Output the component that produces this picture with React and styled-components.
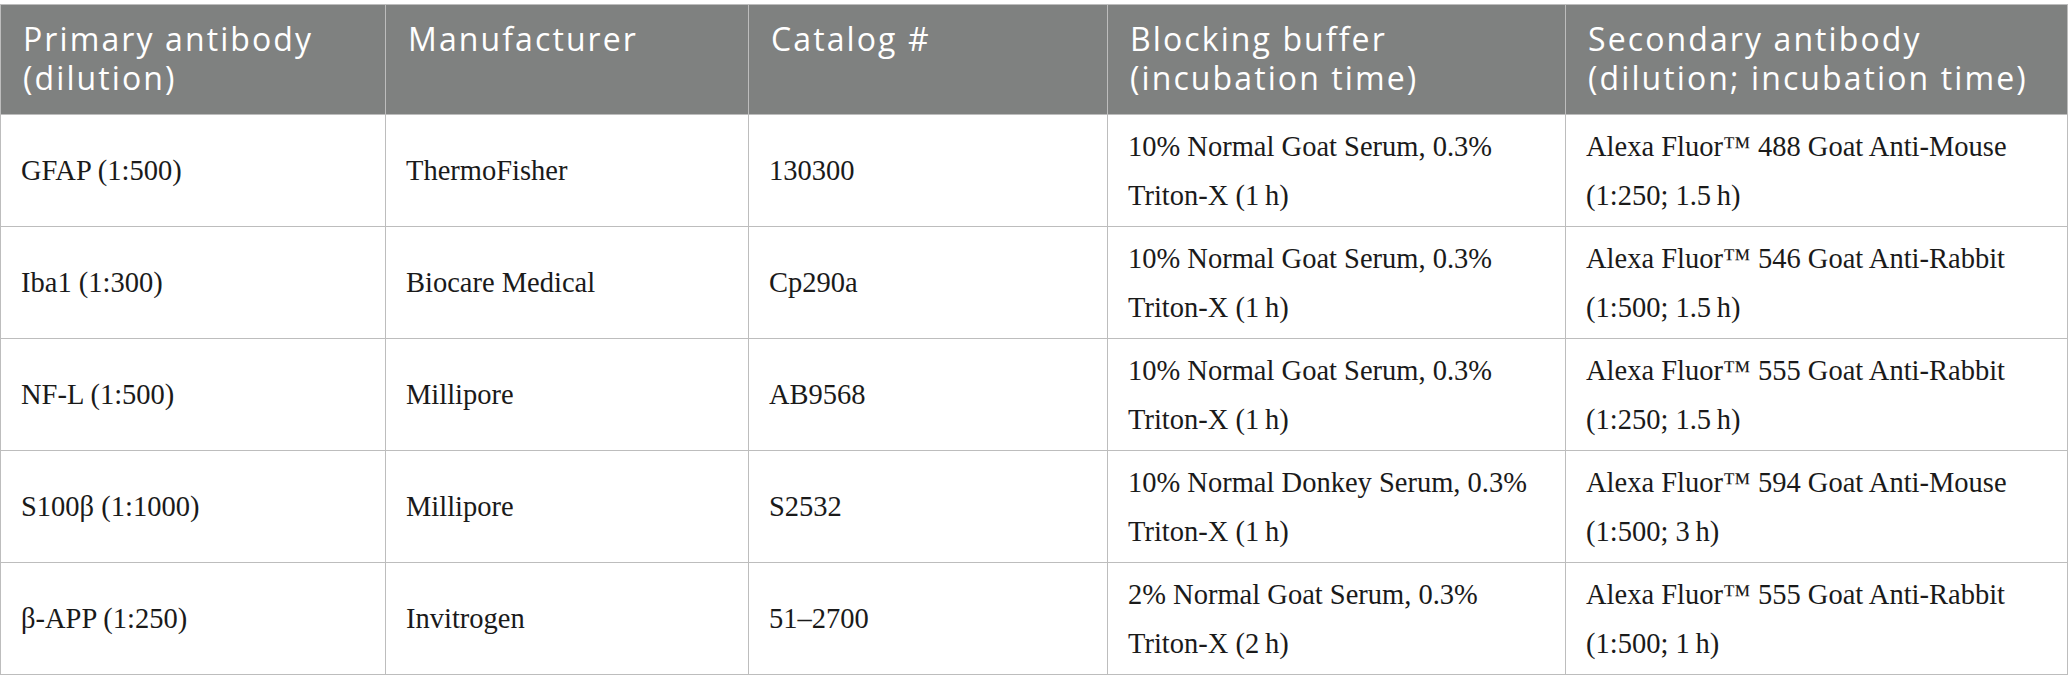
import styled, { createGlobalStyle } from "styled-components";

const GlobalStyle = createGlobalStyle`
  html, body {
    margin: 0;
    padding: 0;
    background: #ffffff;
  }
`;

const Page = styled.div`
  padding-top: 4px;
  width: 2068px;
`;

const Table = styled.table`
  border-collapse: collapse;
  table-layout: fixed;
  width: 2067px;
`;

const HeadCell = styled.th`
  background-color: #7f8180;
  color: #ffffff;
  font-family: "Open Sans", "Noto Sans", sans-serif;
  font-weight: 400;
  font-size: 32px;
  letter-spacing: 2.1px;
  line-height: 39px;
  text-align: left;
  vertical-align: top;
  padding: 14px 8px 17px 22px;
  border: 1px solid #bdbdbd;
  white-space: nowrap;
`;

const Cell = styled.td`
  font-family: "Liberation Serif", "Times New Roman", serif;
  font-size: 28.5px;
  line-height: 49px;
  color: #1a1a1a;
  text-align: left;
  vertical-align: middle;
  padding: 6px 12px 6px 20px;
  height: 99px;
  border: 1px solid #bdbdbd;
  white-space: nowrap;
`;

const columns = [
  { width: 385, title: ["Primary antibody", "(dilution)"] },
  { width: 363, title: ["Manufacturer"] },
  { width: 359, title: ["Catalog #"] },
  { width: 458, title: ["Blocking buffer", "(incubation time)"] },
  { width: 502, title: ["Secondary antibody", "(dilution; incubation time)"] },
];

const rows = [
  [
    ["GFAP (1:500)"],
    ["ThermoFisher"],
    ["130300"],
    ["10% Normal Goat Serum, 0.3%", "Triton-X (1\u2009h)"],
    ["Alexa Fluor\u2122 488 Goat Anti-Mouse", "(1:250; 1.5\u2009h)"],
  ],
  [
    ["Iba1 (1:300)"],
    ["Biocare Medical"],
    ["Cp290a"],
    ["10% Normal Goat Serum, 0.3%", "Triton-X (1\u2009h)"],
    ["Alexa Fluor\u2122 546 Goat Anti-Rabbit", "(1:500; 1.5\u2009h)"],
  ],
  [
    ["NF-L (1:500)"],
    ["Millipore"],
    ["AB9568"],
    ["10% Normal Goat Serum, 0.3%", "Triton-X (1\u2009h)"],
    ["Alexa Fluor\u2122 555 Goat Anti-Rabbit", "(1:250; 1.5\u2009h)"],
  ],
  [
    ["S100\u03B2 (1:1000)"],
    ["Millipore"],
    ["S2532"],
    ["10% Normal Donkey Serum, 0.3%", "Triton-X (1\u2009h)"],
    ["Alexa Fluor\u2122 594 Goat Anti-Mouse", "(1:500; 3\u2009h)"],
  ],
  [
    ["\u03B2-APP (1:250)"],
    ["Invitrogen"],
    ["51\u20132700"],
    ["2% Normal Goat Serum, 0.3%", "Triton-X (2\u2009h)"],
    ["Alexa Fluor\u2122 555 Goat Anti-Rabbit", "(1:500; 1\u2009h)"],
  ],
];

const Lines = ({ lines }) =>
  lines.map((line, i) => (
    <span key={i}>
      {i > 0 && <br />}
      {line}
    </span>
  ));

export default function App() {
  return (
    <Page>
      <GlobalStyle />
      <Table>
        <colgroup>
          {columns.map((c, i) => (
            <col key={i} style={{ width: c.width }} />
          ))}
        </colgroup>
        <thead>
          <tr>
            {columns.map((c, i) => (
              <HeadCell key={i}>
                <Lines lines={c.title} />
              </HeadCell>
            ))}
          </tr>
        </thead>
        <tbody>
          {rows.map((row, r) => (
            <tr key={r}>
              {row.map((cell, i) => (
                <Cell key={i}>
                  <Lines lines={cell} />
                </Cell>
              ))}
            </tr>
          ))}
        </tbody>
      </Table>
    </Page>
  );
}
